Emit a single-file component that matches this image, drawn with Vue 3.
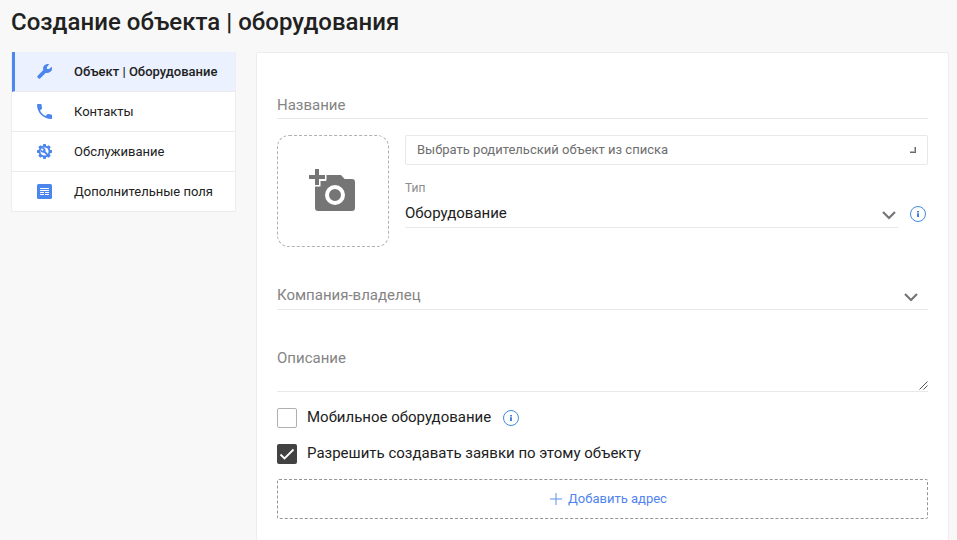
<script setup>
import { ref } from 'vue'

const sections = [
  { id: 'object', label: 'Объект | Оборудование' },
  { id: 'contacts', label: 'Контакты' },
  { id: 'service', label: 'Обслуживание' },
  { id: 'extra', label: 'Дополнительные поля' },
]
const active = ref('object')
const mobile = ref(false)
const allowRequests = ref(true)
</script>

<template>
  <div class="page">
    <h1 class="title">Создание объекта | оборудования</h1>
    <div class="layout">
      <nav class="menu">
        <a
          v-for="s in sections"
          :key="s.id"
          class="menu-item"
          :class="{ active: active === s.id }"
          @click="active = s.id"
        >
          <svg v-if="s.id === 'object'" class="menu-icon" viewBox="0 0 15 15">
            <path d="M.5 11.9l5.8-5.8A4.6 4.6 0 0 1 12.2.3L9.9 2.9v2.2h2.2l2.6-2.4a4.6 4.6 0 0 1-5.8 6l-5.8 5.8a1 1 0 0 1-1.4 0L.5 13.3a1 1 0 0 1 0-1.4z" />
          </svg>
          <svg v-else-if="s.id === 'contacts'" class="menu-icon" viewBox="3 3 18 18">
            <path d="M6.62 10.79c1.44 2.83 3.76 5.14 6.59 6.59l2.2-2.2c.27-.27.67-.36 1.02-.24 1.12.37 2.33.57 3.57.57.55 0 1 .45 1 1V20c0 .55-.45 1-1 1-9.39 0-17-7.61-17-17 0-.55.45-1 1-1h3.5c.55 0 1 .45 1 1 0 1.25.2 2.45.57 3.57.11.35.03.74-.25 1.02l-2.2 2.2z" />
          </svg>
          <svg v-else-if="s.id === 'service'" class="menu-icon" viewBox="0 0 16 16">
            <path d="M6.7 0h2.6l.4 1.9 1.1.5 1.7-1.1 2.1 2-1.1 1.7.5 1.1 2 .5v2.8l-2 .4-.5 1.1 1.1 1.7-2.1 2-1.7-1.1-1.1.5-.4 2H6.7l-.4-2-1.1-.5-1.7 1.1-2.1-2 1.1-1.7L2 9.8l-2-.4V6.6l2-.5L2.5 5 1.4 3.3l2.1-2 1.7 1.1 1.1-.5z" />
            <circle class="gear-hole" cx="8" cy="8" r="4.3" />
            <path d="M12 10.9L8.9 7.8c.4-1 .2-2.1-.6-2.9-.8-.8-2-1-3-.5l1.8 1.8-1.2 1.2-1.8-1.8c-.5 1-.3 2.2.5 3 .8.8 1.9 1 2.9.6l3.1 3.1z" />
          </svg>
          <svg v-else class="menu-icon" viewBox="0 0 15 15">
            <rect width="15" height="15" rx="1.5" />
            <path class="form-lines" d="M3 4.5h9M3 6.5h9M3 8.5h4M8 8.5h4M3 10.5h4M8 10.5h4" />
          </svg>
          <span>{{ s.label }}</span>
        </a>
      </nav>

      <main class="panel">
        <div class="field name">Название</div>

        <div class="object-row">
          <button class="photo">
            <svg viewBox="0 0 46 42">
              <path d="M6 17h5v-5h6V6h15l3.6 4H43a3 3 0 0 1 3 3v26a3 3 0 0 1-3 3H9a3 3 0 0 1-3-3z" />
              <path class="plus" d="M6 0h4v6h6v4h-6v6H6v-6H0V6h6z" />
              <circle class="lens" cx="26" cy="26" r="8" />
            </svg>
          </button>
          <div class="object-fields">
            <div class="parent">
              <span>Выбрать родительский объект из списка</span>
              <i class="corner"></i>
            </div>
            <div class="type-label">Тип</div>
            <div class="type-row">
              <div class="type-select">
                <span>Оборудование</span>
                <svg class="chevron" viewBox="0 0 14 9"><path d="M1 1l6 6 6-6" /></svg>
              </div>
              <svg class="info" viewBox="0 0 16 16"><circle cx="8" cy="8" r="7.5" /><path d="M7 5h2v1.5H7zM7 7.3h2V11H7z" /></svg>
            </div>
          </div>
        </div>

        <div class="field company">
          <span>Компания-владелец</span>
          <svg class="chevron" viewBox="0 0 14 9"><path d="M1 1l6 6 6-6" /></svg>
        </div>

        <div class="field description">
          <span>Описание</span>
          <svg class="grip" viewBox="0 0 9 9"><path d="M.5 8.5l8-8M4.5 8.5l4-4" /></svg>
        </div>

        <div class="check-row" @click="mobile = !mobile">
          <span class="box" :class="{ checked: mobile }">
            <svg v-if="mobile" viewBox="0 0 20 20"><path d="M3.5 10.5l4 4 9-9" /></svg>
          </span>
          <span class="check-label">Мобильное оборудование</span>
          <svg class="info" viewBox="0 0 16 16"><circle cx="8" cy="8" r="7.5" /><path d="M7 5h2v1.5H7zM7 7.3h2V11H7z" /></svg>
        </div>
        <div class="check-row" @click="allowRequests = !allowRequests">
          <span class="box" :class="{ checked: allowRequests }">
            <svg v-if="allowRequests" viewBox="0 0 20 20"><path d="M3.5 10.5l4 4 9-9" /></svg>
          </span>
          <span class="check-label">Разрешить создавать заявки по этому объекту</span>
        </div>

        <button class="add-address">
          <svg viewBox="0 0 12 12"><path d="M6 0v12M0 6h12" /></svg>
          <span>Добавить адрес</span>
        </button>
      </main>
    </div>
  </div>
</template>

<style>
body {
  background: #f8f8f8;
}
</style>

<style scoped>
.page,
.page * {
  box-sizing: border-box;
}
.page {
  display: flex;
  flex-direction: column;
  height: 540px;
  overflow: hidden;
  background: #f8f8f8;
  color: #212121;
  font-family: Roboto, 'Liberation Sans', sans-serif;
}
.title {
  flex: none;
  height: 52px;
  margin: 0;
  padding: 6px 0 0 11px;
  font-size: 24px;
  line-height: 32px;
  font-weight: 500;
  letter-spacing: 0.02px;
}
.layout {
  display: flex;
  align-items: flex-start;
  gap: 20px;
  padding: 0 8px 0 11px;
}
.menu {
  flex: none;
  width: 225px;
  border: solid #ededed;
  border-width: 0 1px;
  background: #fff;
}
.menu-item {
  display: flex;
  align-items: center;
  gap: 22px;
  height: 40px;
  padding-left: 25px;
  border-bottom: 1px solid #ebebeb;
  font-size: 13px;
  cursor: pointer;
}
.menu-item.active {
  padding-left: 22px;
  border-left: 3px solid #4d88ed;
  background: #ebf1ff;
  font-weight: 500;
}
.menu-icon {
  flex: none;
  width: 15px;
  height: 15px;
  fill: #4a86ee;
}
.gear-hole {
  fill: #fff;
}
.form-lines {
  stroke: #fff;
  stroke-width: 1;
}
.panel {
  flex: 1;
  height: 500px;
  padding: 0 20px;
  border: 1px solid #ededed;
  border-radius: 2px;
  background: #fff;
}
.field {
  display: flex;
  justify-content: space-between;
  border-bottom: 1px solid #e8e8e8;
  color: #848484;
  font-size: 15px;
  line-height: 20px;
}
.name {
  height: 66px;
  padding-top: 42px;
}
.object-row {
  display: flex;
  gap: 16px;
  margin-top: 16px;
}
.photo {
  display: flex;
  flex: none;
  width: 112px;
  height: 112px;
  padding: 33px 0 0 31px;
  border: 1px dashed #b0b0b0;
  border-radius: 12px;
  background: #fff;
}
.photo svg {
  width: 46px;
  height: 42px;
  overflow: visible;
  fill: #757575;
}
.photo .plus {
  stroke: #fff;
  stroke-width: 3;
  paint-order: stroke;
}
.photo .lens {
  stroke: #fff;
  stroke-width: 4;
}
.object-fields {
  flex: 1;
}
.parent {
  display: flex;
  align-items: center;
  justify-content: space-between;
  height: 30px;
  padding: 0 11px;
  border: 1px solid #e8e8e8;
  border-radius: 2px;
  color: #6e6e6e;
  font-size: 13px;
}
.parent span {
  padding-bottom: 2px;
}
.corner {
  width: 6px;
  height: 6px;
  border: solid #6a6a6a;
  border-width: 0 1px 1px 0;
  box-shadow: inset -1px -1px 0 #b5b5b5;
}
.type-label {
  padding-top: 15px;
  color: #8c8c8c;
  font-size: 12px;
  line-height: 16px;
}
.type-row {
  display: flex;
  align-items: center;
  gap: 12px;
}
.type-select {
  display: flex;
  flex: 1;
  justify-content: space-between;
  height: 32px;
  padding: 7px 2px 0 0;
  border-bottom: 1px solid #e8e8e8;
  font-size: 15px;
  line-height: 20px;
}
.chevron {
  width: 14px;
  height: 9px;
  margin-top: 8px;
  overflow: visible;
  fill: none;
  stroke: #757575;
  stroke-width: 2.2;
}
.info {
  flex: none;
  width: 16px;
  height: 16px;
  fill: #3f84d8;
}
.type-row .info {
  margin: 3px 2px 0 0;
}
.info circle {
  fill: none;
  stroke: #3f8ae0;
}
.company {
  height: 63px;
  padding: 38px 10px 0 0;
}
.description {
  height: 82px;
  padding-top: 38px;
}
.grip {
  align-self: flex-end;
  width: 9px;
  height: 9px;
  margin-bottom: 1px;
  fill: none;
  stroke: #555;
}
.check-row {
  display: flex;
  align-items: center;
  height: 20px;
  margin-top: 16px;
  font-size: 15px;
  line-height: 20px;
}
.check-label {
  padding-bottom: 2px;
}
.box {
  flex: none;
  width: 20px;
  height: 20px;
  margin-right: 10px;
  border: 1px solid #b0b0b0;
  border-radius: 2px;
}
.box.checked {
  border: 0;
  background: #424242;
}
.box svg {
  display: block;
  fill: none;
  stroke: #fff;
  stroke-width: 1.8;
}
.check-row .info {
  margin-left: 12px;
}
.add-address {
  display: flex;
  align-items: center;
  justify-content: center;
  gap: 6px;
  width: 100%;
  height: 40px;
  margin-top: 15px;
  padding: 0 0 1px 12px;
  border: 1px dashed #959595;
  border-radius: 2px;
  background: #fff;
  color: #5084ee;
  font-family: inherit;
  font-size: 13px;
}
.add-address svg {
  width: 12px;
  height: 12px;
  stroke: #5b90ee;
}
</style>
